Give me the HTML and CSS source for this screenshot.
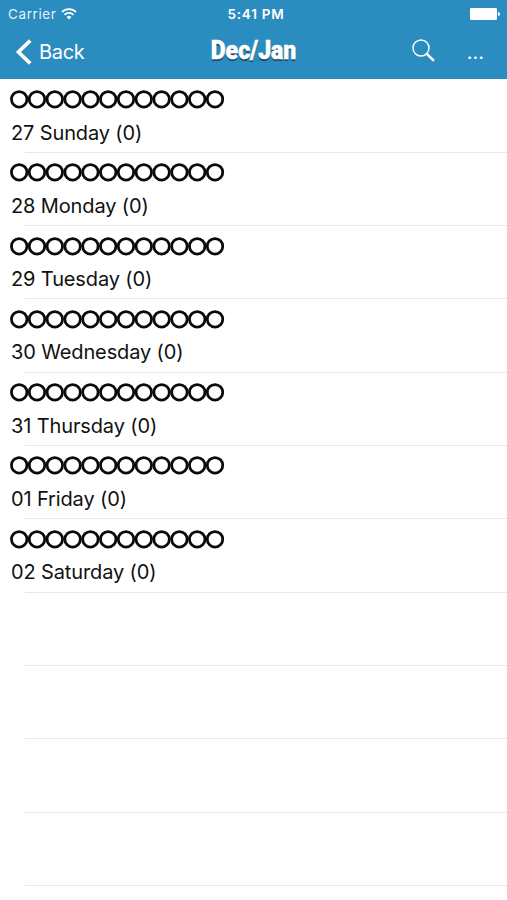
FILE: index.html
```html
<!DOCTYPE html>
<html lang="en">
<head>
    <meta charset="utf-8">
    <title>Dec/Jan</title>
    <link rel="stylesheet" href="styles.css">
</head>
<body>
    <!-- Row of empty hour markers, reused by every day -->
    <svg class="defs" width="0" height="0">
        <defs>
            <g id="hours" fill="none" stroke="#0a0a0a" stroke-width="2.8">
                <circle cx="9.2" cy="9.3" r="7.75"/>
                <circle cx="27" cy="9.3" r="7.75"/>
                <circle cx="44.8" cy="9.3" r="7.75"/>
                <circle cx="62.6" cy="9.3" r="7.75"/>
                <circle cx="80.4" cy="9.3" r="7.75"/>
                <circle cx="98.2" cy="9.3" r="7.75"/>
                <circle cx="116" cy="9.3" r="7.75"/>
                <circle cx="133.8" cy="9.3" r="7.75"/>
                <circle cx="151.6" cy="9.3" r="7.75"/>
                <circle cx="169.4" cy="9.3" r="7.75"/>
                <circle cx="187.2" cy="9.3" r="7.75"/>
                <circle cx="205" cy="9.3" r="7.75"/>
            </g>
        </defs>
    </svg>

    <header>
        <div class="status">
            <div class="carrier">
                <span>Carrier</span>
                <svg width="16" height="12" viewBox="0 0 16 12" fill="none" stroke="#fff" stroke-width="1.7">
                    <path d="M1 4.1a9.9 9.9 0 0 1 14 0"/>
                    <path d="M3.5 6.8a6.4 6.4 0 0 1 9 0"/>
                    <path d="M8 11.4L5.6 9a3.5 3.5 0 0 1 4.8 0z" fill="#fff" stroke="none"/>
                </svg>
            </div>
            <div class="clock">5:41 PM</div>
            <div class="battery">
                <svg width="30" height="12" viewBox="0 0 30 12" fill="#fff">
                    <rect x="0" y="0" width="27" height="12" rx="1.2"/>
                    <path d="M28 4a2 2 0 0 1 0 4z"/>
                </svg>
            </div>
        </div>
        <nav>
            <a class="back">
                <svg width="17" height="26" viewBox="0 0 17 26" fill="none" stroke="#fff" stroke-width="3.6">
                    <path d="M15.2 1.6L3.4 13l11.8 11.4"/>
                </svg>
                <span>Back</span>
            </a>
            <h1><span>Dec/Jan</span></h1>
            <div class="actions">
                <svg width="23" height="23" viewBox="0 0 23 23" fill="none" stroke="#fff">
                    <circle cx="9" cy="9" r="8" stroke-width="1.4"/>
                    <path d="M14.8 14.8l6.4 6.4" stroke-width="2.5" stroke-linecap="round"/>
                </svg>
                <span class="more">...</span>
            </div>
        </nav>
    </header>

    <ul class="days">
        <li><svg class="hours" width="215" height="19"><use href="#hours"/></svg><span>27 Sunday (0)</span></li>
        <li><svg class="hours" width="215" height="19"><use href="#hours"/></svg><span>28 Monday (0)</span></li>
        <li><svg class="hours" width="215" height="19"><use href="#hours"/></svg><span>29 Tuesday (0)</span></li>
        <li><svg class="hours" width="215" height="19"><use href="#hours"/></svg><span>30 Wednesday (0)</span></li>
        <li><svg class="hours" width="215" height="19"><use href="#hours"/></svg><span>31 Thursday (0)</span></li>
        <li><svg class="hours" width="215" height="19"><use href="#hours"/></svg><span>01 Friday (0)</span></li>
        <li><svg class="hours" width="215" height="19"><use href="#hours"/></svg><span>02 Saturday (0)</span></li>
        <li></li>
        <li></li>
        <li></li>
        <li></li>
    </ul>
</body>
</html>
```
FILE: styles.css
```css
* {
    box-sizing: border-box;
}

body {
    margin: 0;
    height: 900px;
    overflow: hidden;
    background-color: #fff;
    color: #111;
    font-family: Inter, "Liberation Sans", sans-serif;
}

.defs {
    display: block;
}

svg {
    flex: none;
}

/* Header */
header {
    height: 79px;
    background-color: #2b8cc0;
    color: #fff;
}

.status {
    display: grid;
    grid-template-columns: 1fr auto 1fr;
    align-items: center;
    height: 27px;
    padding: 0 7px 0 8px;
    font-size: 13px;
}

.carrier {
    display: flex;
    align-items: center;
    gap: 5px;
    font-size: 13.5px;
    letter-spacing: 0.6px;
    color: #e4f1f8;
}

.clock {
    padding-left: 4px;
    font-size: 13.5px;
    font-weight: 600;
    letter-spacing: 0.8px;
}

.battery {
    display: flex;
    justify-content: flex-end;
}

nav {
    display: grid;
    grid-template-columns: 1fr auto 1fr;
    align-items: center;
    height: 50px;
    padding: 0 23px 0 15px;
}

.back {
    display: flex;
    align-items: center;
    gap: 7px;
    font-size: 20px;
    letter-spacing: -0.3px;
}

h1 {
    width: 88px;
    margin: 0 0 3px 9px;
    display: flex;
    justify-content: center;
    font-family: Roboto, "Liberation Sans", sans-serif;
    font-size: 25px;
    font-weight: 900;
    line-height: 28px;
    text-shadow: 0 1.5px 1px #1d4660;
    -webkit-text-stroke: 0.5px #fff;
}

h1 span {
    transform: scaleX(0.92);
}

.actions {
    display: flex;
    justify-content: flex-end;
    align-items: center;
    gap: 32px;
}

.actions svg {
    margin-bottom: 3px;
}

.more {
    font-size: 20px;
}

/* List of days */
.days {
    margin: 0;
    padding: 0.6px 0 0;
    list-style: none;
}

.days li {
    display: flex;
    flex-direction: column;
    height: 73.3px;
    padding: 10.4px 0 0 10px;
    background: linear-gradient(#e8e8ea, #e8e8ea) 25px 100% / 100% 1px no-repeat;
}

.days span {
    margin: 11.6px 0 0 1px;
    font-size: 20px;
    line-height: 24px;
    letter-spacing: -0.13px;
}
```
